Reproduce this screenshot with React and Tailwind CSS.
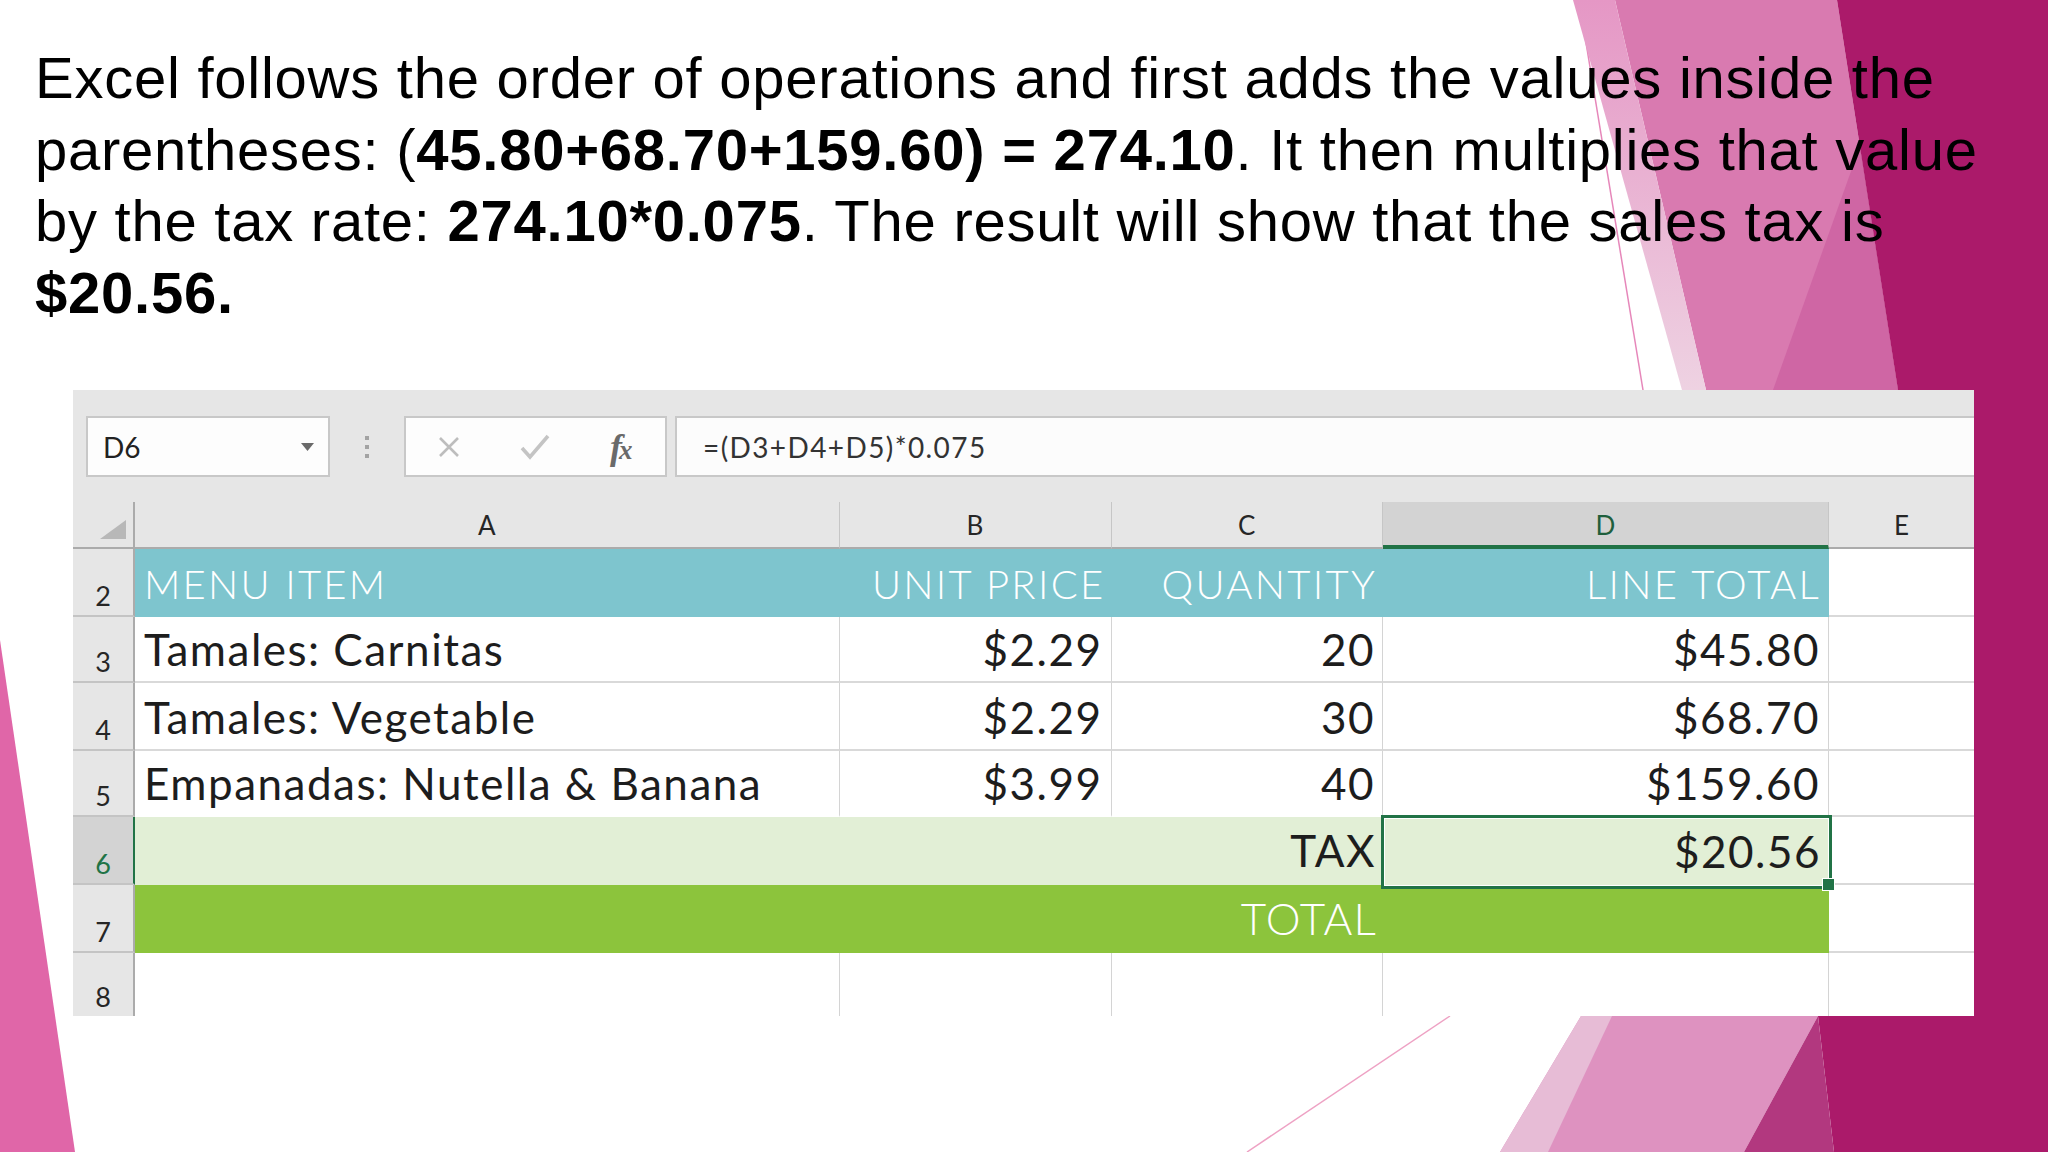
import React from "react";

const LATO = "font-['Lato','Open_Sans',sans-serif]";

function Background() {
  return (
    <svg className="absolute inset-0 pointer-events-none" width="2048" height="1152" viewBox="0 0 2048 1152">
      <defs>
        <linearGradient id="lite" x1="0" y1="0" x2="0" y2="1">
          <stop offset="0" stopColor="#e597c5" />
          <stop offset="1" stopColor="#eed2e2" />
        </linearGradient>
      </defs>
      <line x1="1579" y1="0" x2="1643" y2="390" stroke="#e687ba" strokeWidth="1.5" />
      <polygon points="1615,0 1837,0 1898,390 1706,390" fill="#d97ab0" />
      <polygon points="1573,0 1615,0 1706,390 1682,390" fill="url(#lite)" />
      <polygon points="1860,146 1898,390 1773,390" fill="#cf66a4" />
      <polygon points="1837,0 2048,0 2048,1152 1834,1152 1818,1016 1898,390" fill="#ab1a6a" />
      <polygon points="1581,1016 1818,1016 1744,1152 1500,1152" fill="#de92c0" />
      <polygon points="1581,1016 1612,1016 1548,1152 1500,1152" fill="#e7bcd6" />
      <polygon points="1818,1016 1834,1152 1744,1152" fill="#b2387f" />
      <line x1="1450" y1="1016" x2="1247" y2="1152" stroke="#eea2c4" strokeWidth="1.5" />
      <polygon points="0,640 75,1152 0,1152" fill="#e066a8" />
    </svg>
  );
}

function RowHead({ n, sel, last }) {
  return (
    <div
      className={`w-[62px] shrink-0 flex items-end justify-center pb-[6px] border-r-2 ${
        last ? "" : "border-b-2 border-b-[#c4c4c4]"
      } ${
        sel
          ? "bg-[#d3d3d3] border-r-[#217346] text-[#217346]"
          : "bg-[#e6e6e6] border-r-[#ababab] text-[#262626]"
      } ${LATO} text-[27px] leading-none`}
    >
      {n}
    </div>
  );
}

function ColHead({ w, children, sel, last }) {
  return (
    <div
      className={`${w} shrink-0 flex items-end justify-center ${LATO} text-[26px] leading-none ${
        last ? "" : "border-r border-r-[#c6c6c6]"
      } ${
        sel
          ? "bg-[#d3d3d3] border-b-4 border-b-[#217346] pb-[7px] text-[#1f5f3c]"
          : "border-b-2 border-b-[#ababab] pb-[9px] text-[#262626]"
      }`}
    >
      {children}
    </div>
  );
}

const BODY = `${LATO} text-[44px] leading-none text-[#1d1d1d] tracking-[1.5px]`;
const HEAD = `${LATO} font-light text-[40px] leading-none text-white tracking-[2.3px]`;

function DataRow({ n, h, name, price, qty, total, lastLine }) {
  const bb = lastLine ? "border-b-2 border-b-white" : "border-b-2 border-b-[#d9d9d9]";
  return (
    <div className={`flex ${h} shrink-0`}>
      <RowHead n={n} />
      <div className={`w-[704.5px] shrink-0 bg-white border-r border-r-[#d4d4d4] ${bb} flex items-end pl-[9px] pb-[10px] ${BODY}`}>{name}</div>
      <div className={`w-[272px] shrink-0 bg-white border-r border-r-[#d4d4d4] ${bb} flex items-end justify-end pr-[8px] pb-[10px] ${BODY}`}>{price}</div>
      <div className={`w-[271.5px] shrink-0 bg-white border-r border-r-[#d4d4d4] ${bb} flex items-end justify-end pr-[7px] pb-[10px] ${BODY}`}>{qty}</div>
      <div className={`w-[446px] shrink-0 bg-white border-r border-r-[#d4d4d4] ${bb} flex items-end justify-end pr-[8px] pb-[10px] ${BODY}`}>{total}</div>
      <div className="w-[145px] shrink-0 bg-white border-b-2 border-b-[#d9d9d9]" />
    </div>
  );
}

function Sheet() {
  return (
    <div className="ml-[73px] mt-[62px] w-[1901px] h-[626px] bg-[#e6e6e6] pt-[26px] flex flex-col overflow-hidden">
      {/* formula bar */}
      <div className="flex h-[61px] shrink-0">
        <div className="ml-[13px] w-[244px] shrink-0 border-2 border-[#c8c8c8] bg-[#fdfdfd] flex items-center justify-between pl-[15px] pr-[14px]">
          <span className={`${LATO} text-[28px] leading-none text-[#222]`}>D6</span>
          <svg width="13" height="8" viewBox="0 0 13 8">
            <path d="M0 0H13L6.5 8Z" fill="#6a6a6a" />
          </svg>
        </div>
        <div className="w-[74px] shrink-0 flex flex-col items-center justify-center gap-[5px]">
          <span className="w-[4px] h-[4px] bg-[#a3a3a3]" />
          <span className="w-[4px] h-[4px] bg-[#a3a3a3]" />
          <span className="w-[4px] h-[4px] bg-[#a3a3a3]" />
        </div>
        <div className="w-[263px] shrink-0 border-2 border-[#c8c8c8] bg-[#fdfdfd] flex items-center pl-[32px]">
          <svg width="22" height="22" viewBox="0 0 22 22">
            <path d="M2 2L20 20M20 2L2 20" stroke="#bdbdbd" strokeWidth="2.6" fill="none" />
          </svg>
          <svg className="ml-[60px]" width="30" height="26" viewBox="0 0 30 26">
            <path d="M2 14L10 23L28 2" stroke="#c4c4c4" strokeWidth="3.6" fill="none" />
          </svg>
          <span className="ml-[60px] font-['Liberation_Serif',serif] italic font-semibold text-[36px] leading-none text-[#6a6a6a] tracking-[-3px]">
            f<span className="text-[27px]">x</span>
          </span>
        </div>
        <div className="ml-[8px] flex-1 border-y-2 border-l-2 border-[#c8c8c8] bg-[#fcfcfc] flex items-center pl-[26px]">
          <span className={`${LATO} text-[28px] leading-none text-[#333] tracking-[1.4px]`}>=(D3+D4+D5)*0.075</span>
        </div>
      </div>
      <div className="h-[25px] shrink-0" />
      {/* column headers */}
      <div className="flex h-[47px] shrink-0">
        <div className="w-[62px] shrink-0 border-r-2 border-b-2 border-[#ababab] flex items-end justify-end pr-[7px] pb-[8px]">
          <svg width="26" height="19" viewBox="0 0 26 19">
            <path d="M26 0V19H0Z" fill="#b8b8b8" />
          </svg>
        </div>
        <ColHead w="w-[704.5px]">A</ColHead>
        <ColHead w="w-[272px]">B</ColHead>
        <ColHead w="w-[271.5px]">C</ColHead>
        <ColHead w="w-[446px]" sel>D</ColHead>
        <ColHead w="w-[145px]" last>E</ColHead>
      </div>
      {/* row 2 */}
      <div className="flex h-[68px] shrink-0">
        <RowHead n="2" />
        <div className={`w-[704.5px] shrink-0 bg-[#7ec5ce] flex items-end pl-[9px] pb-[13px] ${HEAD}`}>MENU ITEM</div>
        <div className={`w-[272px] shrink-0 bg-[#7ec5ce] flex items-end justify-end pr-[6px] pb-[13px] ${HEAD}`}>UNIT PRICE</div>
        <div className={`w-[271.5px] shrink-0 bg-[#7ec5ce] flex items-end justify-end pr-[6px] pb-[13px] ${HEAD}`}>QUANTITY</div>
        <div className={`w-[446px] shrink-0 bg-[#7ec5ce] flex items-end justify-end pr-[8px] pb-[13px] ${HEAD}`}>LINE TOTAL</div>
        <div className="w-[145px] shrink-0 bg-white border-b-2 border-b-[#d9d9d9]" />
      </div>
      <DataRow n="3" h="h-[66px]" name="Tamales: Carnitas" price="$2.29" qty="20" total="$45.80" />
      <DataRow n="4" h="h-[68px]" name="Tamales: Vegetable" price="$2.29" qty="30" total="$68.70" />
      <DataRow n="5" h="h-[66px]" name="Empanadas: Nutella & Banana" price="$3.99" qty="40" total="$159.60" lastLine />
      {/* row 6 */}
      <div className="flex h-[68px] shrink-0">
        <RowHead n="6" sel />
        <div className={`w-[1248px] shrink-0 bg-[#e2efd6] flex items-end justify-end pr-[7px] pb-[13px] ${BODY}`}>TAX</div>
        <div className={`relative w-[446px] shrink-0 bg-[#e2efd6] flex items-end justify-end pr-[8px] pb-[12px] ${BODY}`}>
          $20.56
          <div className="absolute -left-[2px] -right-[3px] -top-[2px] -bottom-[4px] z-10 border-[3px] border-[#217346] shadow-[inset_0_0_0_1px_#ffffff]" />
          <div className="absolute -right-[6px] -bottom-[6px] z-20 w-[13px] h-[13px] bg-[#217346] border border-white" />
        </div>
        <div className="w-[145px] shrink-0 bg-white border-b-2 border-b-[#d9d9d9]" />
      </div>
      {/* row 7 */}
      <div className="flex h-[68px] shrink-0">
        <RowHead n="7" />
        <div className={`w-[1248px] shrink-0 bg-[#8cc43c] flex items-end justify-end pr-[6px] pb-[13px] ${LATO} font-light text-[44px] leading-none text-white tracking-[1.2px]`}>TOTAL</div>
        <div className="w-[446px] shrink-0 bg-[#8cc43c]" />
        <div className="w-[145px] shrink-0 bg-white border-b-2 border-b-[#d9d9d9]" />
      </div>
      {/* row 8 */}
      <div className="flex flex-1">
        <RowHead n="8" last />
        <div className="w-[704.5px] shrink-0 bg-white border-r border-r-[#d4d4d4]" />
        <div className="w-[272px] shrink-0 bg-white border-r border-r-[#d4d4d4]" />
        <div className="w-[271.5px] shrink-0 bg-white border-r border-r-[#d4d4d4]" />
        <div className="w-[446px] shrink-0 bg-white border-r border-r-[#d4d4d4]" />
        <div className="w-[145px] shrink-0 bg-white" />
      </div>
    </div>
  );
}

export default function App() {
  return (
    <div className="relative w-[2048px] h-[1152px] overflow-hidden bg-white">
      <Background />
      <div className="relative flex flex-col">
        <div className="pl-[35px] pt-[42px] font-['Liberation_Sans',Arial,sans-serif] text-[58px] leading-[71.5px] tracking-[0.75px] text-black">
          <div className="whitespace-nowrap">Excel follows the order of operations and first adds the values inside the</div>
          <div className="whitespace-nowrap">
            parentheses: (<b>45.80+68.70+159.60) = 274.10</b>. It then multiplies that value
          </div>
          <div className="whitespace-nowrap">
            by the tax rate: <b>274.10*0.075</b>. The result will show that the sales tax is
          </div>
          <div className="whitespace-nowrap">
            <b>$20.56.</b>
          </div>
        </div>
        <Sheet />
      </div>
    </div>
  );
}
